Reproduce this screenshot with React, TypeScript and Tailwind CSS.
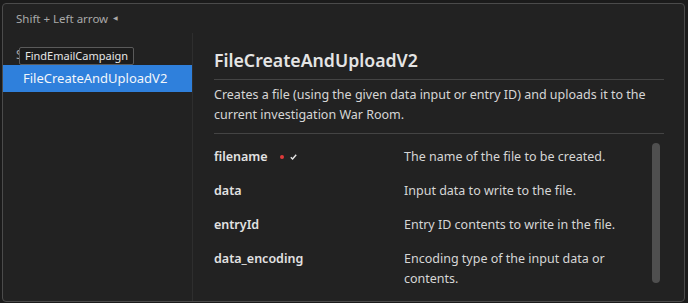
import React from 'react';

const params = [
  { name: 'filename', desc: 'The name of the file to be created.', required: true },
  { name: 'data', desc: 'Input data to write to the file.' },
  { name: 'entryId', desc: 'Entry ID contents to write in the file.' },
  { name: 'data_encoding', desc: 'Encoding type of the input data or contents.' },
];

export default function App() {
  return (
    <div
      className="w-[688px] h-[303px] bg-[#1b1b1b] pt-[3px] pl-[2px] pr-[3px] pb-[1px] overflow-hidden"
      style={{ fontFamily: '"Noto Sans", "Open Sans", sans-serif' }}
    >
      <div className="h-full flex flex-col rounded-[4px] border border-[#4b4b4b] bg-[#222222]">
        <div className="h-[29px] shrink-0 flex items-center gap-[5px] px-[13px] text-[11.5px] text-[#a9a9a9]">
          <span>Shift + Left arrow</span>
          <span className="text-[6px]">◀</span>
        </div>
        <div className="flex flex-1 min-h-0">
          <div className="relative w-[190px] shrink-0 border-r border-[#2e2e2e] pt-[12px]">
            <div className="px-[13px] h-[20px] text-[12px] leading-[20px] text-[#a9a9a9]">Scripts</div>
            <div className="h-[27px] bg-[#2f80dc] pl-[20px] text-[13px] leading-[27px] text-[#f2f6fb]">
              FileCreateAndUploadV2
            </div>
            <div className="absolute left-[16px] top-[14px] h-[18px] px-[5px] rounded-[2px] border border-[#5a5a5a] bg-[#1c1c1c] text-[11px] leading-[16px] text-[#e6e6e6]">
              FindEmailCampaign
            </div>
          </div>
          <div className="flex-1 min-w-0 pl-[21px] pr-[20px] flex flex-col">
            <div className="h-[46px] pt-[14px] text-[17.7px] leading-[26px] font-semibold text-[#e4e4e4]">
              FileCreateAndUploadV2
            </div>
            <div className="border-t border-[#444444]" />
            <div className="pt-[5px] pb-[8px] text-[12.5px] leading-[20px] text-[#d6d6d6]">
              Creates a file (using the given data input or entry ID) and uploads it to the current investigation War Room.
            </div>
            <div className="border-t border-[#444444]" />
            <div className="flex flex-1 min-h-0 pt-[13px]">
              <div className="flex-1 flex flex-col gap-[14px]">
                {params.map((p) => (
                  <div key={p.name} className="flex text-[12.5px] leading-[20px]">
                    <div className="w-[190px] shrink-0 flex items-start font-semibold text-[#e2e2e2]">
                      <span>{p.name}</span>
                      {p.required && (
                        <span className="ml-[12px] mt-[7px] flex items-center gap-[6px]">
                          <span className="w-[4px] h-[4px] rounded-full bg-[#e03a3a]" />
                          <svg width="7" height="6" viewBox="0 0 7 6" fill="none">
                            <path d="M0.8 3.2 L2.6 5 L6.2 0.8" stroke="#e6e6e6" strokeWidth="1.4" />
                          </svg>
                        </span>
                      )}
                    </div>
                    <div className="w-[225px] text-[#d6d6d6]">{p.desc}</div>
                  </div>
                ))}
              </div>
              <div className="w-[8px] h-[140px] mt-[-4px] mr-[4px] rounded-full bg-[#4f4f4f]" />
            </div>
          </div>
        </div>
      </div>
    </div>
  );
}
